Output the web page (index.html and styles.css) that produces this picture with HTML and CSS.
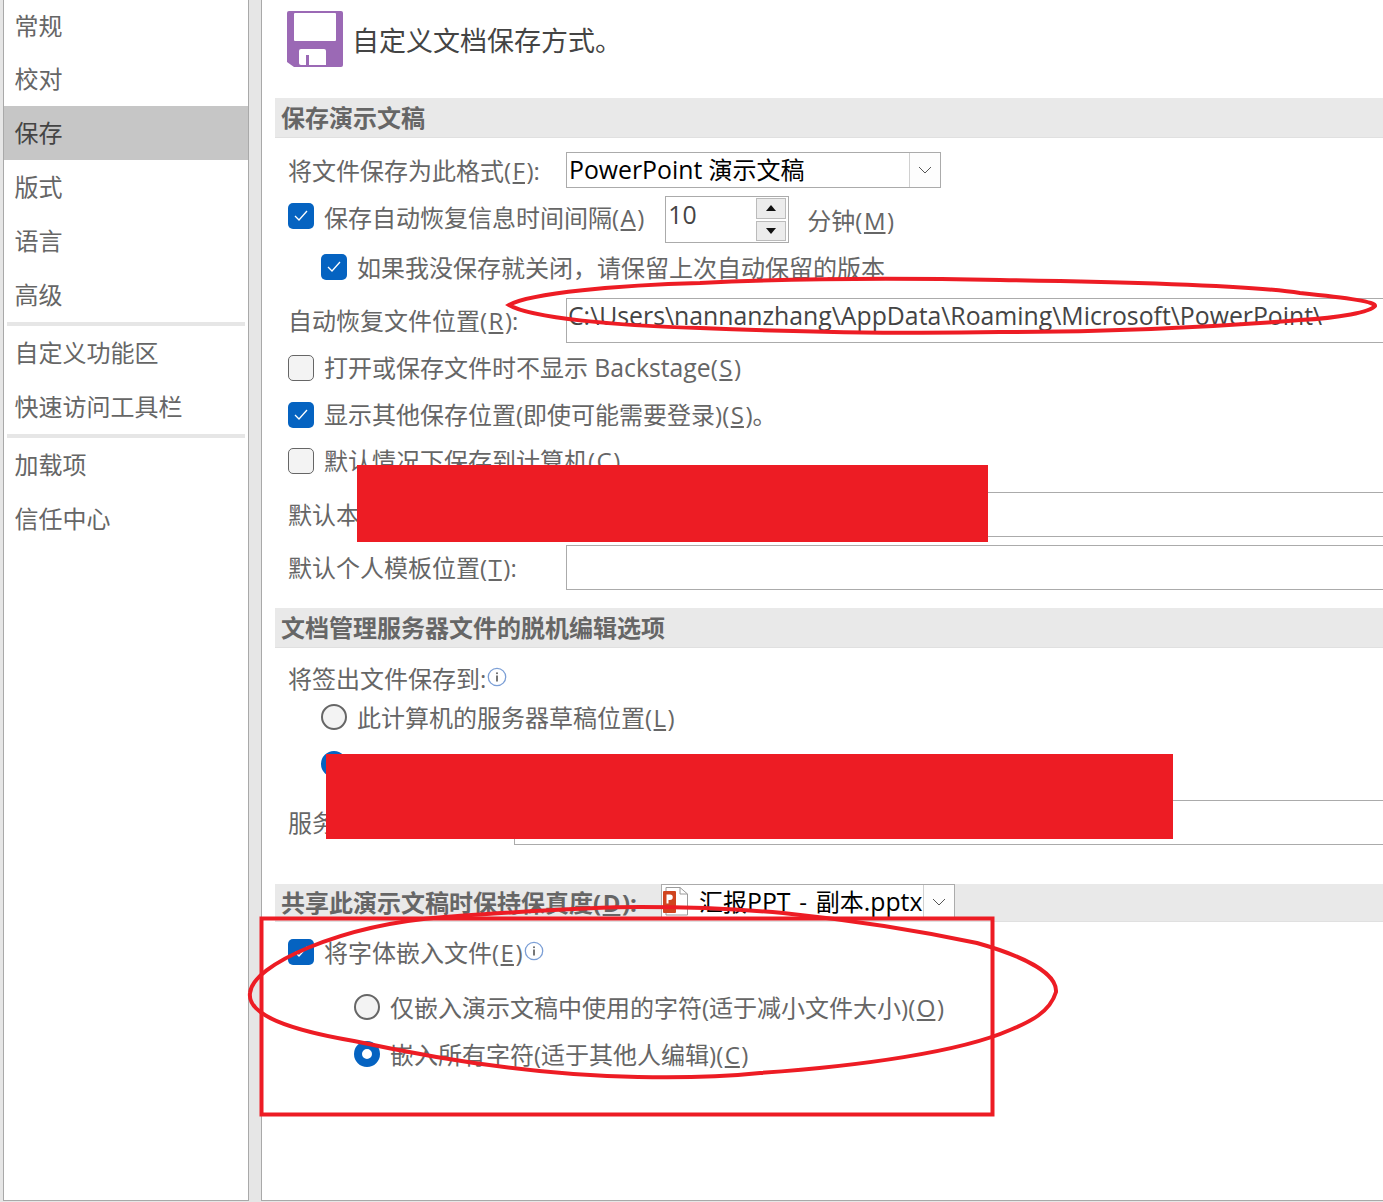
FILE: index.html
```html
<!DOCTYPE html>
<html lang="zh">
<head>
<meta charset="utf-8">
<title>PowerPoint 选项</title>
<link rel="stylesheet" href="styles.css">
</head>
<body>
<div class="page">
  <nav class="side">
    <a class="nav first">常规</a>
    <a class="nav">校对</a>
    <a class="nav active">保存</a>
    <a class="nav">版式</a>
    <a class="nav">语言</a>
    <a class="nav">高级</a>
    <div class="sep"></div>
    <a class="nav">自定义功能区</a>
    <a class="nav">快速访问工具栏</a>
    <div class="sep"></div>
    <a class="nav">加载项</a>
    <a class="nav">信任中心</a>
  </nav>
  <div class="gutter"></div>
  <main class="main">
    <header class="head">
      <svg class="save-icon" width="56" height="56" viewBox="0 0 56 56"><path d="M2 0H54a2 2 0 0 1 2 2V54a2 2 0 0 1-2 2H7L0 51V2a2 2 0 0 1 2-2Z" fill="#9b69b5"/><rect x="7" y="2" width="42" height="28" rx="1" fill="#fff"/><path d="M14 38H37a2 2 0 0 1 2 2V54H14a2 2 0 0 1-2-2V40a2 2 0 0 1 2-2Z" fill="#fff"/><rect x="19" y="44" width="3" height="10" fill="#9b69b5"/></svg>
      <h1 class="title">自定义文档保存方式。</h1>
    </header>

    <h2 class="sec">保存演示文稿</h2>
    <div class="row mt14 h36">
      <span class="label w277">将文件保存为此格式(<u>F</u>):</span>
      <div class="select sel-format"><span class="sel-text"><span class="lat">PowerPoint</span> 演示文稿</span><span class="chev"><svg width="14" height="8" viewBox="0 0 14 8"><path d="M1 1l6 6 6-6" fill="none" stroke="#555" stroke-width="1"/></svg></span></div>
    </div>
    <div class="row mt8 h47 ind13">
      <span class="cb on up3"><svg width="14" height="12" viewBox="0 0 14 12"><path d="M1 6l4 4 8-9" fill="none" stroke="#fff" stroke-width="1.3"/></svg></span>
      <span class="text t10 down">保存自动恢复信息时间间隔(<u>A</u>)</span>
      <div class="spin">
        <span class="spin-val"><span class="lat">10</span></span>
        <div class="spin-btns">
          <span class="spin-btn"><i class="tri-up"></i></span>
          <span class="spin-btn"><i class="tri-down"></i></span>
        </div>
      </div>
      <span class="text t19 down2">分钟(<u>M</u>)</span>
    </div>
    <div class="row mt11 h26 ind46">
      <span class="cb on"><svg width="14" height="12" viewBox="0 0 14 12"><path d="M1 6l4 4 8-9" fill="none" stroke="#fff" stroke-width="1.3"/></svg></span>
      <span class="text t10">如果我没保存就关闭，请保留上次自动保留的版本</span>
    </div>
    <div class="row mt18 h45">
      <span class="label w277">自动恢复文件位置(<u>R</u>):</span>
      <div class="field path">C:\Users\nannanzhang\AppData\Roaming\Microsoft\PowerPoint\</div>
    </div>
    <div class="row mt12 h26 ind13">
      <span class="cb"></span>
      <span class="text t10 tight">打开或保存文件时不显示 <span class="lat">Backstage</span>(<u>S</u>)</span>
    </div>
    <div class="row mt21 h26 ind13">
      <span class="cb on"><svg width="14" height="12" viewBox="0 0 14 12"><path d="M1 6l4 4 8-9" fill="none" stroke="#fff" stroke-width="1.3"/></svg></span>
      <span class="text t10 tight">显示其他保存位置(即使可能需要登录)(<u>S</u>)。</span>
    </div>
    <div class="row mt20 h26 ind13">
      <span class="cb"></span>
      <span class="text t10 tight">默认情况下保存到计算机(<u>C</u>)</span>
    </div>
    <div class="row mt18 h45">
      <span class="label w277">默认本地文件位置(<u>I</u>):</span>
      <div class="field"></div>
    </div>
    <div class="row mt8 h45">
      <span class="label w277">默认个人模板位置(<u>T</u>):</span>
      <div class="field"></div>
    </div>

    <h2 class="sec mt18">文档管理服务器文件的脱机编辑选项</h2>
    <div class="row mt15 h30">
      <span class="label">将签出文件保存到:</span>
      <svg class="info" width="20" height="20" viewBox="0 0 20 20"><circle cx="10" cy="10" r="8.7" fill="none" stroke="#7c9fd6" stroke-width="1.3"/><rect x="9.2" y="8.5" width="1.6" height="6" fill="#555"/><rect x="9.2" y="5.4" width="1.6" height="1.7" fill="#555"/></svg>
    </div>
    <div class="row mt11 h26 ind46">
      <span class="radio"></span>
      <span class="text t10">此计算机的服务器草稿位置(<u>L</u>)</span>
    </div>
    <div class="row mt21 h26 ind46">
      <span class="radio on"></span>
    </div>
    <div class="row mt23 h45">
      <span class="label w225">服务器草稿位置(<u>V</u>):</span>
      <div class="field"></div>
    </div>

    <div class="sec sec3 mt39">
      <h2 class="sec3-title">共享此演示文稿时保持保真度(<u>D</u>):</h2>
      <div class="select sel-doc">
        <svg class="ppt" width="26" height="31" viewBox="0 0 26 31"><path d="M3 2.500H17L24.500 9V30H3Z" fill="#fff" stroke="#9a9a9a"/><path d="M17 2.500V9H24.500" fill="none" stroke="#9a9a9a"/><rect x="0" y="6" width="13" height="22" rx="1" fill="#d0441f"/><path d="M3.500 9.500h3.500a2.500 2.500 0 0 1 0 5.500h-1.500v3.500h-2Z" fill="#fff"/></svg>
        <span class="sel-text doc-text">汇报<span class="lat">PPT</span> - 副本<span class="lat">.pptx</span></span>
        <span class="chev chev-doc"><svg width="14" height="8" viewBox="0 0 14 8"><path d="M1 1l6 6 6-6" fill="none" stroke="#555" stroke-width="1"/></svg></span>
      </div>
    </div>
    <div class="row mt17 h26 ind13">
      <span class="cb on"><svg width="14" height="12" viewBox="0 0 14 12"><path d="M1 6l4 4 8-9" fill="none" stroke="#fff" stroke-width="1.3"/></svg></span>
      <span class="text t10">将字体嵌入文件(<u>E</u>)</span>
      <svg class="info" width="20" height="20" viewBox="0 0 20 20"><circle cx="10" cy="10" r="8.7" fill="none" stroke="#7c9fd6" stroke-width="1.3"/><rect x="9.2" y="8.5" width="1.6" height="6" fill="#555"/><rect x="9.2" y="5.4" width="1.6" height="1.7" fill="#555"/></svg>
    </div>
    <div class="row mt29 h26 ind79">
      <span class="radio"></span>
      <span class="text t10">仅嵌入演示文稿中使用的字符(适于减小文件大小)(<u>O</u>)</span>
    </div>
    <div class="row mt21 h26 ind79">
      <span class="radio on"></span>
      <span class="text t10">嵌入所有字符(适于其他人编辑)(<u>C</u>)</span>
    </div>
  </main>

  <svg class="marks" width="1383" height="1202" viewBox="0 0 1383 1202">
    <rect x="357" y="465" width="631" height="77" fill="#ed1c24"/>
    <rect x="326" y="754" width="847" height="85" fill="#ed1c24"/>
    <path d="M509 305C530 293 620 285 700 283C800 278 900 278 1000 280C1130 282 1250 285 1300 293C1350 298 1376 302 1375 306C1370 312 1340 318 1300 320C1200 328 1100 332 1000 332C900 334 800 332 700 328C620 326 530 318 509 305Z" fill="none" stroke="#ed1c24" stroke-width="4"/>
    <path d="M250 993C252 965 340 925 444 917C520 912 580 907 640 907C690 907 740 909 783 913C860 921 925 932 977 943C1030 958 1057 975 1056 992C1050 1012 1030 1022 1010 1030C960 1052 860 1066 760 1073C720 1077 680 1078 638 1077C560 1076 470 1066 354 1041C290 1030 247 1015 250 993Z" fill="none" stroke="#ed1c24" stroke-width="4"/>
    <rect x="261.500" y="918.500" width="731" height="196" fill="none" stroke="#ed1c24" stroke-width="4"/>
  </svg>
</div>
</body>
</html>
```

FILE: styles.css
```css
* { box-sizing: border-box; }
html, body { margin: 0; padding: 0; background: #e6e6e6; }
body { font-family: "Open Sans", "Noto Sans CJK SC", sans-serif; font-size: 24px; color: #666; }
u { margin: 0 1.500px; }
.lat { font-size: 24.800px; line-height: 1; }
.page { position: relative; display: flex; width: 1383px; height: 1202px; overflow: hidden; padding-left: 3px; padding-bottom: 1px; background: #e6e6e6; }

.side { width: 246px; border-left: 1px solid #a9a9a9; border-right: 1px solid #a9a9a9; border-bottom: 1px solid #a9a9a9; background: #fff; flex: none; }
.nav { display: flex; align-items: center; height: 54px; padding-left: 10.500px; line-height: 1; color: #666; }
.nav.first { height: 52px; }
.nav.active { background: #c6c6c6; color: #444; }
.sep { height: 4px; margin: 0 3px; background: #e6e6e6; }

.gutter { width: 12px; flex: none; }

.main { flex: 1; min-width: 0; padding-left: 13px; border-left: 1px solid #a9a9a9; border-bottom: 1px solid #a9a9a9; background: #fff; }
.head { display: flex; align-items: flex-start; height: 98px; padding: 11px 0 0 12px; }
.save-icon { flex: none; }
.title { margin: 9px 0 0 9px; font-size: 27px; font-weight: 400; line-height: 42px; color: #444; }

.sec { display: flex; align-items: center; height: 40px; margin: 0; padding: 0 0 2px 6px; background: #e9e9e9; border-bottom: 1px solid #e0e0e0; font-size: 24px; font-weight: 700; color: #666; white-space: nowrap; }
.sec3 { height: 38px; padding-bottom: 0; align-items: flex-start; }
.sec3-title { margin: 0; width: 380px; flex: none; font-size: 24px; line-height: 38px; font-weight: 700; color: #666; }

.row { display: flex; align-items: center; white-space: nowrap; padding-left: 13px; }
.ind13 { padding-left: 13px; }
.ind46 { padding-left: 46px; }
.ind79 { padding-left: 79px; }
.h26 { height: 26px; } .h30 { height: 30px; } .h36 { height: 36px; } .h45 { height: 45px; } .h47 { height: 47px; }
.mt8 { margin-top: 8px; } .mt11 { margin-top: 11px; } .mt12 { margin-top: 12px; } .mt14 { margin-top: 14px; } .mt15 { margin-top: 15px; } .mt17 { margin-top: 17px; } .mt18 { margin-top: 18px; } .mt20 { margin-top: 20px; } .mt21 { margin-top: 21px; } .mt23 { margin-top: 23px; } .mt29 { margin-top: 29px; } .mt39 { margin-top: 39px; }

.label { flex: none; line-height: 30px; margin-top: 1px; }
.w277 { width: 278px; }
.w225 { width: 226px; }
.text { line-height: 30px; }
.t10 { margin: 2px 0 0 10px; }
.t10.tight { margin-top: 0; }
.t19 { margin-left: 18px; }
.up3 { margin-top: -7px; }
.t10.down { margin-top: -3px; }
.down2 { margin-top: 3px; }

.cb { display: flex; align-items: center; justify-content: center; flex: none; width: 26px; height: 26px; border: 1.500px solid #666; border-radius: 5px; background: #f3f3f3; }
.cb.on { border: 0; background: #0563c1; }
.radio { flex: none; width: 26px; height: 26px; border: 2px solid #666; border-radius: 50%; background: #f3f3f3; }
.radio.on { border: 8px solid #0563c1; background: #fff; }

.select { display: flex; align-items: stretch; flex: none; background: #fff; border: 1.500px solid #ababab; color: #000; font-weight: 400; }
.sel-format { width: 375px; height: 36px; }
.sel-text { flex: 1; padding-left: 2px; line-height: 33px; }
.chev { display: flex; align-items: center; justify-content: center; width: 31px; flex: none; border-left: 1px solid #d0d0d0; background: #fdfdfd; }
.sel-doc { width: 294px; height: 36px; }
.ppt { flex: none; margin: 0 0 0 1px; }
.doc-text { padding-left: 10px; word-spacing: 2.500px; }
.chev-doc { width: 31px; }

.spin { display: flex; flex: none; width: 124px; height: 47px; margin-left: 21px; border: 1.500px solid #ababab; color: #444; }
.spin-val { flex: 1; padding-left: 2px; line-height: 36px; }
.spin-btns { display: flex; flex-direction: column; gap: 2px; width: 32px; padding: 1px 2px 1px 0; }
.spin-btn { display: flex; align-items: center; justify-content: center; flex: 1; background: #ececec; border: 1px solid #bbb; }
.tri-up { width: 0; height: 0; border: 5px solid transparent; border-top: 0; border-bottom: 6px solid #111; }
.tri-down { width: 0; height: 0; border: 5px solid transparent; border-bottom: 0; border-top: 6px solid #111; }

.field { flex: 1; height: 45px; border: 1.500px solid #ababab; border-right: 0; background: #fff; }
.path { padding: 0 0 0 1px; font-size: 24.800px; line-height: 33px; color: #444; overflow: hidden; }
.info { flex: none; margin: -2px 0 0 1px; }

.marks { position: absolute; left: 0; top: 0; pointer-events: none; }
```
